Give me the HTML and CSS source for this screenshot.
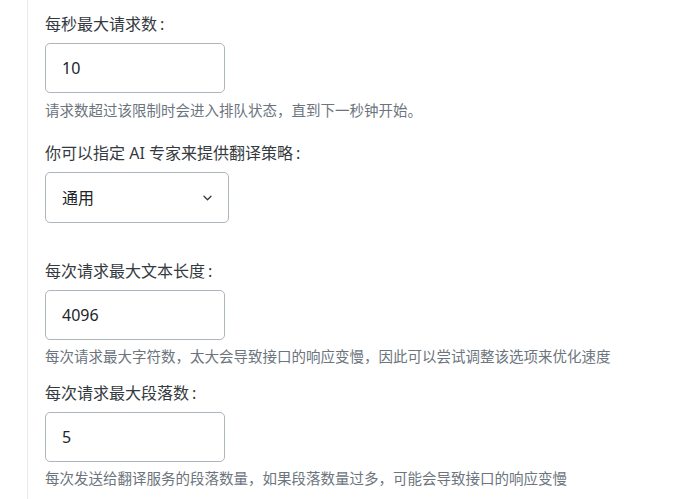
FILE: index.html
```html
<!DOCTYPE html>
<html lang="zh-CN">
<head>
  <meta charset="UTF-8">
  <meta name="viewport" content="width=device-width, initial-scale=1.0">
  <title>翻译服务设置</title>
  <link rel="stylesheet" href="styles.css">
</head>

<body>
  <div class="panel">
    <div class="field field-first">
      <label class="field-label" for="qps">每秒最大请求数<span class="colon">:</span></label>
      <input id="qps" class="text-input" type="text" value="10">
      <p class="field-help">请求数超过该限制时会进入排队状态，直到下一秒钟开始。</p>
    </div>

    <div class="field field-select">
      <label class="field-label" for="expert">你可以指定 AI 专家来提供翻译策略<span class="colon">:</span></label>
      <div class="select-box">
        <select id="expert" class="select-input">
          <option>通用</option>
        </select>
        <svg class="chevron" width="9" height="6" viewBox="0 0 9 6">
          <path d="M1 1.2l3.5 3.5 3.5-3.5" fill="none" stroke="#343a40" stroke-width="1.3" stroke-linecap="round" stroke-linejoin="round"/>
        </svg>
      </div>
    </div>

    <div class="field field-long">
      <label class="field-label" for="maxlen">每次请求最大文本长度<span class="colon">:</span></label>
      <input id="maxlen" class="text-input" type="text" value="4096">
      <p class="field-help">每次请求最大字符数，太大会导致接口的响应变慢，因此可以尝试调整该选项来优化速度</p>
    </div>

    <div class="field">
      <label class="field-label" for="paras">每次请求最大段落数<span class="colon">:</span></label>
      <input id="paras" class="text-input" type="text" value="5">
      <p class="field-help">每次发送给翻译服务的段落数量，如果段落数量过多，可能会导致接口的响应变慢</p>
    </div>
  </div>
</body>
</html>
```

FILE: styles.css
```css
/* Global Styles */
body {
  margin: 0;
  background: #fff;
  font-family: "Noto Sans", "Noto Sans CJK SC", sans-serif;
  color: #343a40;
}

.panel {
  margin-left: 27px;
  min-height: 499px;
  border-left: 1px solid #e9ecef;
  padding: 0 0 0 17px;
  box-sizing: border-box;
}

.field {
  display: flex;
  flex-direction: column;
  align-items: flex-start;
}

.field-first {
  padding-top: 12px;
}

.field-select {
  margin-top: 21px;
}

.field-long {
  margin-top: 36px;
}

.field-long + .field {
  margin-top: 15px;
}

.field-label {
  font-size: 16px;
  line-height: 24px;
  color: #343a40;
  margin-bottom: 7px;
}

.colon {
  margin-left: 3px;
}

.text-input,
.select-input {
  box-sizing: border-box;
  width: 180px;
  height: 50px;
  margin: 0;
  padding: 0 16px;
  border: 1px solid #adb5bd;
  border-radius: 5px;
  background: #fff;
  font-family: "Noto Sans", "Noto Sans CJK SC", sans-serif;
  font-size: 16px;
  color: #212529;
  outline: none;
}

.field-help {
  margin: 6px 0 0;
  font-size: 14.5px;
  line-height: 20px;
  color: #6c757d;
}

.field-first .field-help {
  margin-top: 7px;
}

/* Select with custom chevron */
.select-box {
  position: relative;
}

.select-input {
  width: 184px;
  height: 51px;
  -webkit-appearance: none;
  appearance: none;
}

.chevron {
  position: absolute;
  right: 17px;
  top: 23px;
  pointer-events: none;
}
```
